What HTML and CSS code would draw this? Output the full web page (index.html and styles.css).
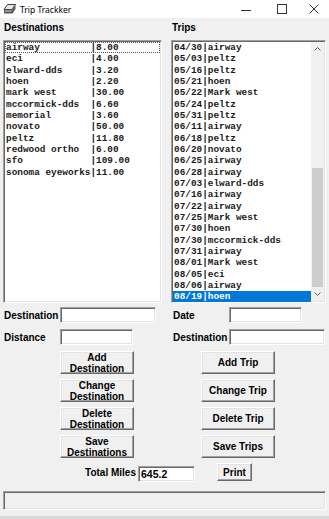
FILE: index.html
```html
<!DOCTYPE html>
<html>
<head>
<meta charset="utf-8">
<link rel="stylesheet" href="styles.css">
</head>
<body>
<div class="titlebar">
  <svg class="app-icon" viewBox="0 0 13 11" width="13" height="11">
    <path d="M4.5 0.5h8l-3.5 5h-8z" fill="#e8e8e8" stroke="#3a3a3a"/>
    <path d="M1 5.5h8.5l3-4.5v4l-3 4.5H1z" fill="#5a5a5a"/>
    <path d="M2 7h6.5" stroke="#cfcfcf"/>
  </svg>
  <span class="title">Trip Trackker</span>
  <div class="controls">
    <svg class="ctrl ctrl-min" viewBox="0 0 10 10" width="10" height="10"><path d="M0 6.5h10" stroke="#333"/></svg>
    <svg class="ctrl ctrl-max" viewBox="0 0 10 10" width="10" height="10"><rect x="0.5" y="0.5" width="9" height="9" fill="none" stroke="#333"/></svg>
    <svg class="ctrl ctrl-close" viewBox="0 0 10 10" width="10" height="10"><path d="M0.5 0.5l9 9M9.5 0.5l-9 9" stroke="#333"/></svg>
  </div>
</div>
<div class="body">
  <div class="columns">
    <section class="col col-left">
      <div class="heading">Destinations</div>
      <div class="listbox">
        <div class="items">
          <div class="item focus">airway         |8.00</div>
          <div class="item">eci            |4.00</div>
          <div class="item">elward-dds     |3.20</div>
          <div class="item">hoen           |2.20</div>
          <div class="item">mark west      |30.00</div>
          <div class="item">mccormick-dds  |6.60</div>
          <div class="item">memorial       |3.60</div>
          <div class="item">novato         |50.00</div>
          <div class="item">peltz          |11.80</div>
          <div class="item">redwood ortho  |6.00</div>
          <div class="item">sfo            |109.00</div>
          <div class="item">sonoma eyeworks|11.00</div>
        </div>
      </div>
      <div class="field-row first">
        <span class="label">Destination</span><span class="input w96"></span>
      </div>
      <div class="field-row">
        <span class="label">Distance</span><span class="input w73"></span>
      </div>
      <div class="buttons">
        <button class="btn">Add<br>Destination</button>
        <button class="btn">Change<br>Destination</button>
        <button class="btn">Delete<br>Destination</button>
        <button class="btn">Save<br>Destinations</button>
      </div>
    </section>
    <section class="col col-right">
      <div class="heading">Trips</div>
      <div class="listbox scroll">
        <div class="items">
          <div class="item">04/30|airway</div>
          <div class="item">05/03|peltz</div>
          <div class="item">05/16|peltz</div>
          <div class="item">05/21|hoen</div>
          <div class="item">05/22|Mark west</div>
          <div class="item">05/24|peltz</div>
          <div class="item">05/31|peltz</div>
          <div class="item">06/11|airway</div>
          <div class="item">06/18|peltz</div>
          <div class="item">06/20|novato</div>
          <div class="item">06/25|airway</div>
          <div class="item">06/28|airway</div>
          <div class="item">07/03|elward-dds</div>
          <div class="item">07/16|airway</div>
          <div class="item">07/22|airway</div>
          <div class="item">07/25|Mark west</div>
          <div class="item">07/30|hoen</div>
          <div class="item">07/30|mccormick-dds</div>
          <div class="item">07/31|airway</div>
          <div class="item">08/01|Mark west</div>
          <div class="item">08/05|eci</div>
          <div class="item">08/06|airway</div>
          <div class="item selected">08/19|hoen</div>
        </div>
        <div class="scrollbar">
          <div class="arrow"><svg viewBox="0 0 7 4" width="7" height="4"><path d="M0.5 3.5l3-3 3 3" fill="none" stroke="#606060"/></svg></div>
          <div class="track"><div class="thumb"></div></div>
          <div class="arrow"><svg viewBox="0 0 7 4" width="7" height="4"><path d="M0.5 0.5l3 3 3-3" fill="none" stroke="#606060"/></svg></div>
        </div>
      </div>
      <div class="field-row first">
        <span class="label">Date</span><span class="input w73"></span>
      </div>
      <div class="field-row">
        <span class="label">Destination</span><span class="input w96"></span>
      </div>
      <div class="buttons">
        <button class="btn">Add Trip</button>
        <button class="btn">Change Trip</button>
        <button class="btn">Delete Trip</button>
        <button class="btn">Save Trips</button>
      </div>
    </section>
  </div>
  <div class="total-row">
    <span class="total-label">Total Miles</span>
    <span class="input total-input">645.2</span>
    <button class="btn print">Print</button>
  </div>
  <div class="statusbar"></div>
</div>
</body>
</html>
```
FILE: styles.css
```css
html, body {
  margin: 0;
  padding: 0;
}
body {
  width: 329px;
  height: 519px;
  overflow: hidden;
  background: #f0f0f0;
  font-family: "Liberation Sans", Arial, sans-serif;
  color: #000;
  box-sizing: border-box;
  border-bottom: 3px solid #dadada;
}
.titlebar {
  height: 18px;
  background: #fff;
  display: flex;
  align-items: center;
  padding-left: 3px;
}
.app-icon {
  margin-right: 4px;
}
.title {
  font-family: "Noto Sans", "Open Sans", sans-serif;
  font-size: 8.5px;
}
.controls {
  margin-left: auto;
  display: flex;
  align-items: center;
  padding-right: 10px;
}
.ctrl-max { margin-left: 26px; }
.ctrl-close { margin-left: 22px; }

.body {
  padding: 4px 3px 0;
}
.columns {
  display: grid;
  grid-template-columns: 159px 155px;
  column-gap: 9px;
}
.heading {
  font-weight: bold;
  font-size: 10px;
  line-height: 12px;
  height: 12px;
  margin-bottom: 6px;
  padding-left: 1px;
}
.listbox {
  height: 263px;
  box-sizing: border-box;
  background: #fff;
  border: 1px solid;
  border-color: #a0a0a0 #fff #fff #a0a0a0;
  box-shadow: inset 1px 1px 0 #696969, inset -1px -1px 0 #e3e3e3;
  padding: 1px;
  display: flex;
  overflow: hidden;
}
.items {
  flex: 1;
  min-width: 0;
  font-family: "Liberation Mono", "Courier New", monospace;
  font-size: 9.4px;
  font-weight: bold;
  color: #1a1a1a;
}
.item {
  height: 11.33px;
  line-height: 11.33px;
  white-space: pre;
  padding-left: 1px;
}
.item.focus {
  outline: 1px dotted #555;
  outline-offset: -1px;
}
.item.selected {
  background: #0078d7;
  color: #fff;
}
.scrollbar {
  width: 13px;
  display: flex;
  flex-direction: column;
  background: #f0f0f0;
}
.arrow {
  height: 14px;
  display: flex;
  align-items: center;
  justify-content: center;
}
.track {
  flex: 1;
  display: flex;
  flex-direction: column;
}
.thumb {
  margin: 112px 1px 0;
  flex: 1;
  background: #cdcdcd;
}
.field-row {
  display: flex;
  align-items: center;
  height: 16px;
  margin-top: 6px;
}
.field-row.first {
  margin-top: 4px;
}
.label {
  font-weight: bold;
  font-size: 10px;
  box-sizing: border-box;
}
.col-left .label { width: 57px; padding-left: 1px; }
.col-right .label { width: 58px; padding-left: 2px; }
.input {
  display: inline-block;
  height: 16px;
  box-sizing: border-box;
  background: #fff;
  border: 1px solid;
  border-color: #a0a0a0 #fff #fff #a0a0a0;
  box-shadow: inset 1px 1px 0 #696969, inset -1px -1px 0 #e3e3e3;
}
.w96 { width: 96px; }
.w73 { width: 73px; }
.buttons {
  display: flex;
  flex-direction: column;
  gap: 5px;
  margin-top: 6px;
}
.col-left .buttons { padding-left: 57px; }
.col-right .buttons { padding-left: 30px; }
.btn {
  width: 74px;
  height: 23px;
  box-sizing: border-box;
  padding: 0;
  margin: 0;
  background: #f0f0f0;
  border: 1px solid;
  border-color: #fff #696969 #696969 #fff;
  box-shadow: inset -1px -1px 0 #a0a0a0, inset 1px 1px 0 #e3e3e3;
  font-family: "Liberation Sans", Arial, sans-serif;
  font-weight: bold;
  font-size: 10px;
  line-height: 11px;
  color: #000;
}
.total-row {
  display: flex;
  align-items: center;
  height: 18px;
  margin-top: 5px;
}
.total-label {
  width: 133px;
  text-align: right;
  font-weight: bold;
  font-size: 10px;
}
.total-input {
  width: 57px;
  margin-left: 2px;
  margin-top: 3px;
  font-size: 10.5px;
  font-weight: bold;
  line-height: 14px;
  padding-left: 2px;
}
.btn.print {
  width: 35px;
  height: 18px;
  margin-left: 22px;
}
.statusbar {
  margin-top: 10px;
  width: 323px;
  height: 19px;
  box-sizing: border-box;
  border: 1px solid;
  border-color: #a0a0a0 #fff #fff #a0a0a0;
  box-shadow: inset 1px 1px 0 #696969, inset -1px -1px 0 #e3e3e3;
}
```
